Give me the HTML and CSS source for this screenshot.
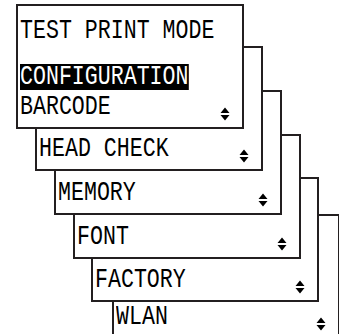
FILE: index.html
```html
<!DOCTYPE html>
<html lang="en">
<head>
  <meta charset="utf-8">
  <title>Test print mode</title>
  <link rel="stylesheet" href="styles.css">
</head>
<body>
<div id="stack">

  <div class="card card1">
    <div class="line"><span class="txt">TEST PRINT MODE</span></div>
    <div class="list">
      <div class="line"><span class="txt sel">CONFIGURATION</span></div>
      <div class="row">
        <span class="txt">BARCODE</span>
        <svg class="updown" width="10" height="14" viewBox="0 0 10 14"><path d="M5 0.5 L9.5 6 L0.5 6 Z M0.5 8 L9.5 8 L5 13.5 Z"/></svg>
      </div>
    </div>
  </div>

  <div class="card card2">
    <div class="row">
      <span class="txt">HEAD CHECK</span>
      <svg class="updown" width="10" height="14" viewBox="0 0 10 14"><path d="M5 0.5 L9.5 6 L0.5 6 Z M0.5 8 L9.5 8 L5 13.5 Z"/></svg>
    </div>
  </div>

  <div class="card card3">
    <div class="row">
      <span class="txt">MEMORY</span>
      <svg class="updown" width="10" height="14" viewBox="0 0 10 14"><path d="M5 0.5 L9.5 6 L0.5 6 Z M0.5 8 L9.5 8 L5 13.5 Z"/></svg>
    </div>
  </div>

  <div class="card card4">
    <div class="row">
      <span class="txt">FONT</span>
      <svg class="updown" width="10" height="14" viewBox="0 0 10 14"><path d="M5 0.5 L9.5 6 L0.5 6 Z M0.5 8 L9.5 8 L5 13.5 Z"/></svg>
    </div>
  </div>

  <div class="card card5">
    <div class="row">
      <span class="txt">FACTORY</span>
      <svg class="updown" width="10" height="14" viewBox="0 0 10 14"><path d="M5 0.5 L9.5 6 L0.5 6 Z M0.5 8 L9.5 8 L5 13.5 Z"/></svg>
    </div>
  </div>

  <div class="card card6">
    <div class="row">
      <span class="txt">WLAN</span>
      <svg class="updown" width="10" height="14" viewBox="0 0 10 14"><path d="M5 0.5 L9.5 6 L0.5 6 Z M0.5 8 L9.5 8 L5 13.5 Z"/></svg>
    </div>
  </div>

</div>
</body>
</html>
```

FILE: styles.css
```css
body {
  margin: 0;
  background-color: #ffffff;
}

#stack {
  position: relative;
  width: 339px;
  height: 334px;
  overflow: hidden;
  font-family: "Liberation Mono", "DejaVu Sans Mono", monospace;
  font-size: 27px;
  color: #000000;
}

/* each screen is a window stacked behind the one before it */
.card {
  position: absolute;
  box-sizing: border-box;
  width: 228px;
  height: 125px;
  padding: 12px 0 7px 2px;
  border: 2px solid #231f20;
  background-color: #ffffff;
  display: flex;
  flex-direction: column;
  justify-content: flex-end;
}
.card1 { left: 16px;  top: 4px;   z-index: 6; justify-content: space-between; }
.card2 { left: 35px;  top: 46px;  z-index: 5; }
.card3 { left: 54px;  top: 90px;  z-index: 4; }
.card4 { left: 73px;  top: 134px; z-index: 3; }
.card5 { left: 91px;  top: 177px; z-index: 2; }
.card6 { left: 112px; top: 214px; z-index: 1; }

.list {
  display: flex;
  flex-direction: column;
  gap: 4px;
}

.line,
.row {
  height: 26px;
  line-height: 26px;
  white-space: nowrap;
}
.row {
  display: flex;
  justify-content: space-between;
}

.txt {
  display: inline-block;
  transform: scaleX(0.8);
  transform-origin: 0 50%;
}
.sel {
  background-color: #000000;
  color: #ffffff;
}

.updown {
  align-self: flex-end;
  margin-right: 12px;
  margin-bottom: -1px;
  fill: #000000;
}
```
